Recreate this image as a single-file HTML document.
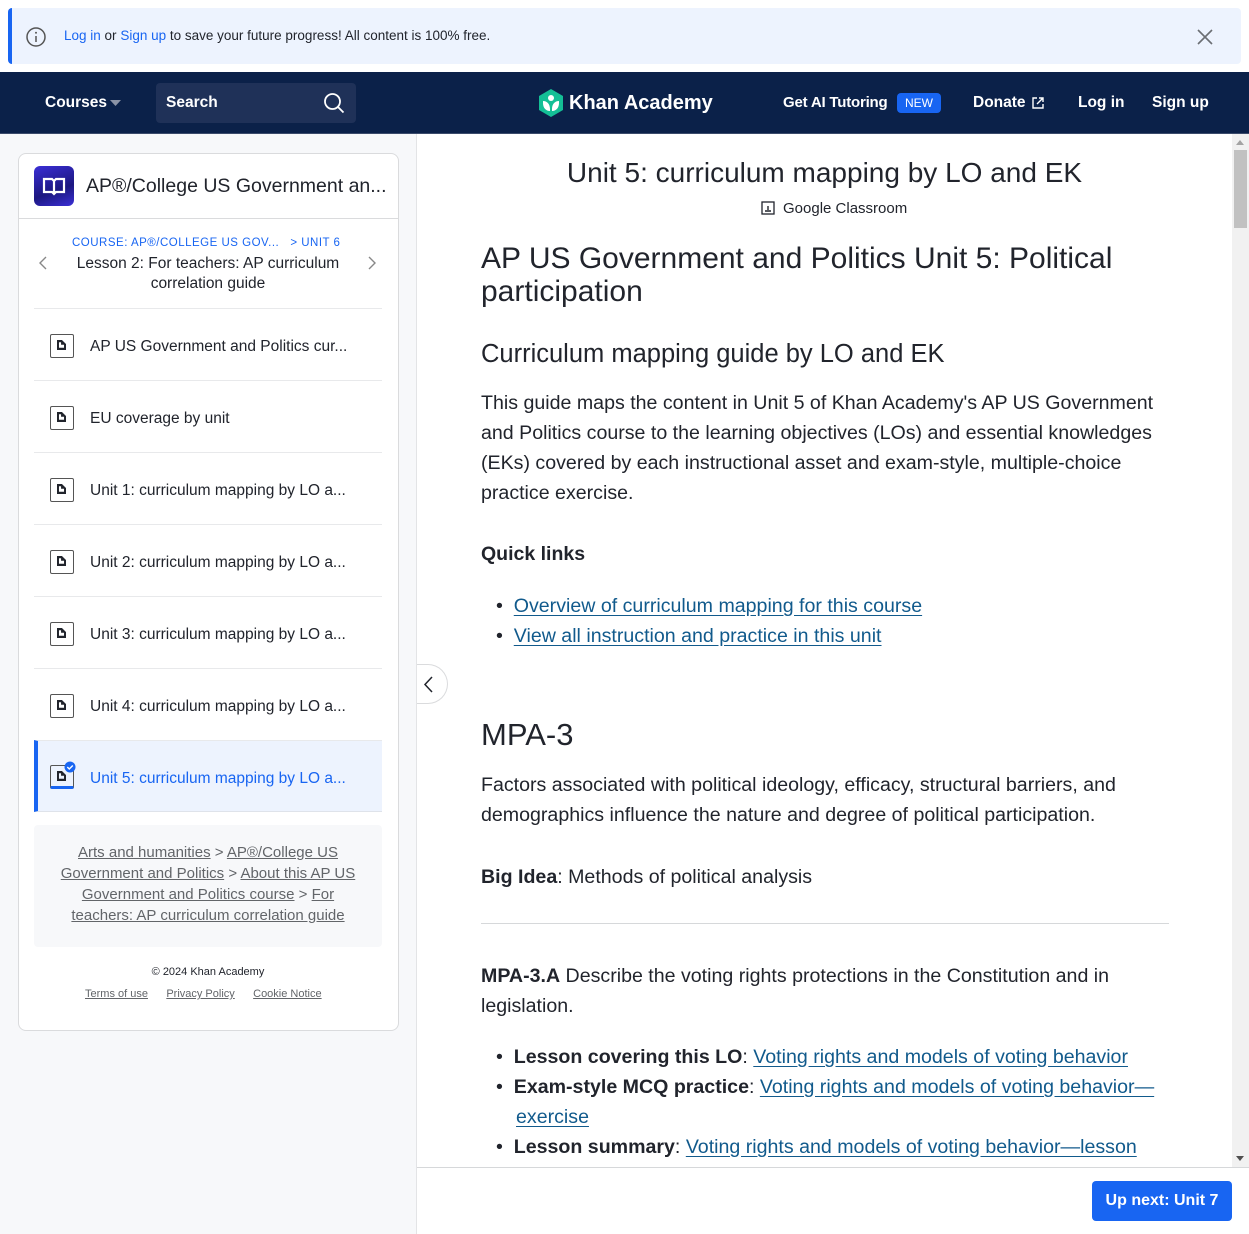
<!DOCTYPE html>
<html><head><meta charset="utf-8"><style>
*{margin:0;padding:0;box-sizing:border-box}
body{width:1249px;height:1234px;overflow:hidden;font-family:"Liberation Sans",sans-serif;color:#21242c;background:#fff;position:relative}
.a{position:absolute;white-space:nowrap}
.lk{color:#115a8c;text-decoration:underline;text-underline-offset:3px}
.side-item{position:absolute;left:34px;width:348px;height:72px;border-top:1px solid #e8e9eb}
.ico{position:absolute;left:16px;top:25px;width:24px;height:24px;border:1.5px solid #555;border-radius:2px}
.ico:after{content:"";position:absolute;left:6px;top:5px;width:9px;height:10px;background:#21242c;clip-path:polygon(0 0,55% 0,100% 40%,100% 100%,0 100%,0 0,22% 22%,22% 78%,78% 78%,78% 48%,45% 48%,45% 22%,22% 22%)}
.side-item span{position:absolute;left:56px;top:29px;font-size:15.5px;color:#21242c}
.p{font-size:19.6px;line-height:30px;color:#21242c}
.fg{color:#626569;text-decoration:underline}
</style></head><body>
<div class="a" style="left:8px;top:8px;width:1233px;height:56px;background:#edf3fe;border-radius:4px;border-left:4px solid #1865f2"></div>
<svg class="a" style="left:25px;top:26px" width="22" height="22" viewBox="0 0 22 22"><circle cx="11" cy="11" r="9" fill="none" stroke="#555" stroke-width="1.5"/><line x1="11" y1="10" x2="11" y2="16" stroke="#555" stroke-width="1.5"/><circle cx="11" cy="6.8" r="1" fill="#555"/></svg>
<div class="a" style="left:64px;top:28px;font-size:13.5px;color:#21242c"><span style="color:#1865f2">Log in</span> or <span style="color:#1865f2">Sign up</span> to save your future progress! All content is 100% free.</div>
<svg class="a" style="left:1196px;top:28px" width="18" height="18"><path d="M2 2L16 16M16 2L2 16" stroke="#6b6e73" stroke-width="1.6"/></svg>
<div class="a" style="left:0;top:72px;width:1249px;height:62px;background:#0b2149;border-bottom:1px solid #3b4b6b"></div>
<div class="a" style="left:45px;top:94px;font-size:15.5px;font-weight:bold;color:#fff">Courses</div>
<svg class="a" style="left:110px;top:99px" width="12" height="8"><path d="M0 1h11L5.5 7z" fill="#8b93a6"/></svg>
<div class="a" style="left:156px;top:83px;width:200px;height:40px;background:#1f3158;border-radius:4px"></div>
<div class="a" style="left:166px;top:94px;font-size:15.5px;font-weight:bold;color:#fff">Search</div>
<svg class="a" style="left:323px;top:92px" width="22" height="22"><circle cx="9.5" cy="9.5" r="7.5" fill="none" stroke="#fff" stroke-width="1.8"/><path d="M15 15l5.5 5.5" stroke="#fff" stroke-width="1.8"/></svg>
<svg class="a" style="left:537px;top:88px" width="28" height="30" viewBox="0 0 28 30"><path d="M14 1L26 8v14l-12 7L2 22V8z" fill="#14bf96"/><circle cx="14" cy="10" r="3" fill="#fff"/><path d="M6 13c4 0 7 3 7 8v2c-4 0-7-3-7-8z M22 13c-4 0-7 3-7 8v2c4 0 7-3 7-8z" fill="#fff"/></svg>
<div class="a" style="left:569px;top:92px;font-size:20px;font-weight:bold;color:#fff">Khan Academy</div>
<div class="a" style="left:783px;top:94px;font-size:15px;font-weight:bold;color:#fff;letter-spacing:-0.2px">Get AI Tutoring</div>
<div class="a" style="left:897px;top:93px;width:44px;height:20px;background:#1865f2;border-radius:4px;font-size:12px;color:#fff;text-align:center;line-height:20px">NEW</div>
<div class="a" style="left:973px;top:94px;font-size:15.5px;font-weight:bold;color:#fff">Donate</div>
<svg class="a" style="left:1031px;top:96px" width="14" height="14"><path d="M6 2H2v10h10V8M8 2h4v4M12 2L6 8" fill="none" stroke="#fff" stroke-width="1.4"/></svg>
<div class="a" style="left:1078px;top:94px;font-size:15.5px;font-weight:bold;color:#fff">Log in</div>
<div class="a" style="left:1152px;top:94px;font-size:15.5px;font-weight:bold;color:#fff">Sign up</div>
<div class="a" style="left:0;top:134px;width:417px;height:1100px;background:#f7f8fa;border-right:1px solid #e3e4e6"></div>
<div class="a" style="left:18px;top:153px;width:381px;height:878px;background:#fff;border:1px solid #dadbdd;border-radius:8px"></div>
<div class="a" style="left:34px;top:166px;width:40px;height:40px;border-radius:6px;background:linear-gradient(160deg,#3b2fd6,#1c1780 60%,#3b2fd6)"></div>
<svg class="a" style="left:42px;top:176px" width="24" height="20"><path d="M2 3h8l2 2 2-2h8v13h-8l-2 2-2-2H2z M12 5v12" fill="none" stroke="#fff" stroke-width="2.2"/></svg>
<div class="a" style="left:86px;top:175px;font-size:19.5px;color:#21242c">AP®/College US Government an...</div>
<div class="a" style="left:19px;top:218px;width:379px;height:1px;background:#dadbdd"></div>
<div class="a" style="left:72px;top:237px;font-size:11.5px;color:#1865f2;letter-spacing:.5px">COURSE: AP®/COLLEGE US GOV...&nbsp;&nbsp; &gt; UNIT 6</div>
<div class="a" style="left:60px;top:254px;width:296px;text-align:center;font-size:15.5px;line-height:20px;white-space:normal">Lesson 2: For teachers: AP curriculum correlation guide</div>
<svg class="a" style="left:38px;top:256px" width="10" height="14"><path d="M8 1L2 7l6 6" fill="none" stroke="#888" stroke-width="1.4"/></svg>
<svg class="a" style="left:367px;top:256px" width="10" height="14"><path d="M2 1l6 6-6 6" fill="none" stroke="#888" stroke-width="1.4"/></svg>
<div class="side-item" style="top:308px"><div class="ico"></div><span>AP US Government and Politics cur...</span></div>
<div class="side-item" style="top:380px"><div class="ico"></div><span>EU coverage by unit</span></div>
<div class="side-item" style="top:452px"><div class="ico"></div><span>Unit 1: curriculum mapping by LO a...</span></div>
<div class="side-item" style="top:524px"><div class="ico"></div><span>Unit 2: curriculum mapping by LO a...</span></div>
<div class="side-item" style="top:596px"><div class="ico"></div><span>Unit 3: curriculum mapping by LO a...</span></div>
<div class="side-item" style="top:668px"><div class="ico"></div><span>Unit 4: curriculum mapping by LO a...</span></div>
<div class="side-item" style="top:740px;background:#edf3fe;border-left:4px solid #1865f2;border-bottom:1px solid #dfe3ea"><div class="ico" style="left:12px;top:24px;border-bottom:3px solid #1865f2"></div><svg class="a" style="left:26px;top:20px" width="12" height="12"><circle cx="6" cy="6" r="5.5" fill="#1865f2"/><path d="M3.3 6l2 2 3.5-3.5" fill="none" stroke="#fff" stroke-width="1.4"/></svg><span style="left:52px;color:#1865f2">Unit 5: curriculum mapping by LO a...</span></div>
<div class="a" style="left:34px;top:825px;width:348px;height:122px;background:#f7f8fa;border-radius:4px"></div>
<div class="a" style="left:50px;top:842px;width:316px;text-align:center;white-space:normal;font-size:15px;line-height:21px;color:#626569"><span class="fg">Arts and humanities</span> &gt; <span class="fg">AP®/College US Government and Politics</span> &gt; <span class="fg">About this AP US Government and Politics course</span> &gt; <span class="fg">For teachers: AP curriculum correlation guide</span></div>
<div class="a" style="left:34px;top:966px;width:348px;text-align:center;font-size:11px;color:#21242c">© 2024 Khan Academy</div>
<div class="a" style="left:85px;top:988px;font-size:11px;color:#626569"><span class="fg">Terms of use</span>&nbsp;&nbsp;&nbsp;&nbsp;&nbsp; <span class="fg">Privacy Policy</span>&nbsp;&nbsp;&nbsp;&nbsp;&nbsp; <span class="fg">Cookie Notice</span></div>
<div class="a" style="left:417px;top:664px;width:31px;height:40px;background:#fff;border:1px solid #dadbdd;border-left:none;border-radius:0 20px 20px 0"></div>
<svg class="a" style="left:423px;top:676px" width="12" height="18"><path d="M9 1L2 8.5 9 16" fill="none" stroke="#21242c" stroke-width="1.5"/></svg>
<div class="a" style="left:1232px;top:134px;width:17px;height:1034px;background:#f1f1f1"></div>
<div class="a" style="left:1234px;top:150px;width:13px;height:78px;background:#c1c1c1"></div>
<svg class="a" style="left:1236px;top:140px" width="9" height="6"><path d="M0 5h8L4 0z" fill="#a3a3a3"/></svg>
<svg class="a" style="left:1236px;top:1156px" width="9" height="6"><path d="M0 0h8L4 5z" fill="#505050"/></svg>
<div class="a" style="left:417px;top:157px;width:815px;text-align:center;font-size:28px;color:#21242c">Unit 5: curriculum mapping by LO and EK</div>
<svg class="a" style="left:761px;top:201px" width="14" height="14"><rect x="1" y="1" width="12" height="12" fill="none" stroke="#21242c" stroke-width="1.3"/><path d="M4 10h6M7 5v4" stroke="#21242c" stroke-width="1.4"/></svg>
<div class="a" style="left:783px;top:200px;font-size:15px;color:#21242c">Google Classroom</div>
<div class="a" style="left:481px;top:242px;font-size:30px;line-height:33px;color:#21242c">AP US Government and Politics Unit 5: Political<br>participation</div>
<div class="a" style="left:481px;top:340px;font-size:25.5px;color:#21242c">Curriculum mapping guide by LO and EK</div>
<div class="a p" style="left:481px;top:388px">This guide maps the content in Unit 5 of Khan Academy's AP US Government<br>and Politics course to the learning objectives (LOs) and essential knowledges<br>(EKs) covered by each instructional asset and exam-style, multiple-choice<br>practice exercise.</div>
<div class="a" style="left:481px;top:543px;font-size:19.5px;font-weight:bold;color:#21242c">Quick links</div>
<div class="a p" style="left:496px;top:591px">•&nbsp;&nbsp;<span class="lk">Overview of curriculum mapping for this course</span><br>•&nbsp;&nbsp;<span class="lk">View all instruction and practice in this unit</span></div>
<div class="a" style="left:481px;top:717px;font-size:31px;color:#21242c">MPA-3</div>
<div class="a p" style="left:481px;top:770px">Factors associated with political ideology, efficacy, structural barriers, and<br>demographics influence the nature and degree of political participation.</div>
<div class="a p" style="left:481px;top:862px"><b>Big Idea</b>: Methods of political analysis</div>
<div class="a" style="left:481px;top:923px;width:688px;height:1px;background:#d6d8da"></div>
<div class="a p" style="left:481px;top:961px"><b>MPA-3.A</b> Describe the voting rights protections in the Constitution and in<br>legislation.</div>
<div class="a p" style="left:496px;top:1042px">•&nbsp;&nbsp;<b>Lesson covering this LO</b>: <span class="lk">Voting rights and models of voting behavior</span><br>•&nbsp;&nbsp;<b>Exam-style MCQ practice</b>: <span class="lk">Voting rights and models of voting behavior—</span><br><span style="padding-left:20px"></span><span class="lk">exercise</span><br>•&nbsp;&nbsp;<b>Lesson summary</b>: <span class="lk">Voting rights and models of voting behavior—lesson</span></div>
<div class="a" style="left:417px;top:1167px;width:832px;height:67px;background:#fff;border-top:1px solid #d6d8da"></div>
<div class="a" style="left:1092px;top:1181px;width:140px;height:40px;background:#1865f2;border-radius:4px;color:#fff;font-size:16px;font-weight:bold;text-align:center;line-height:40px">Up next: Unit 7</div>
</body></html>
